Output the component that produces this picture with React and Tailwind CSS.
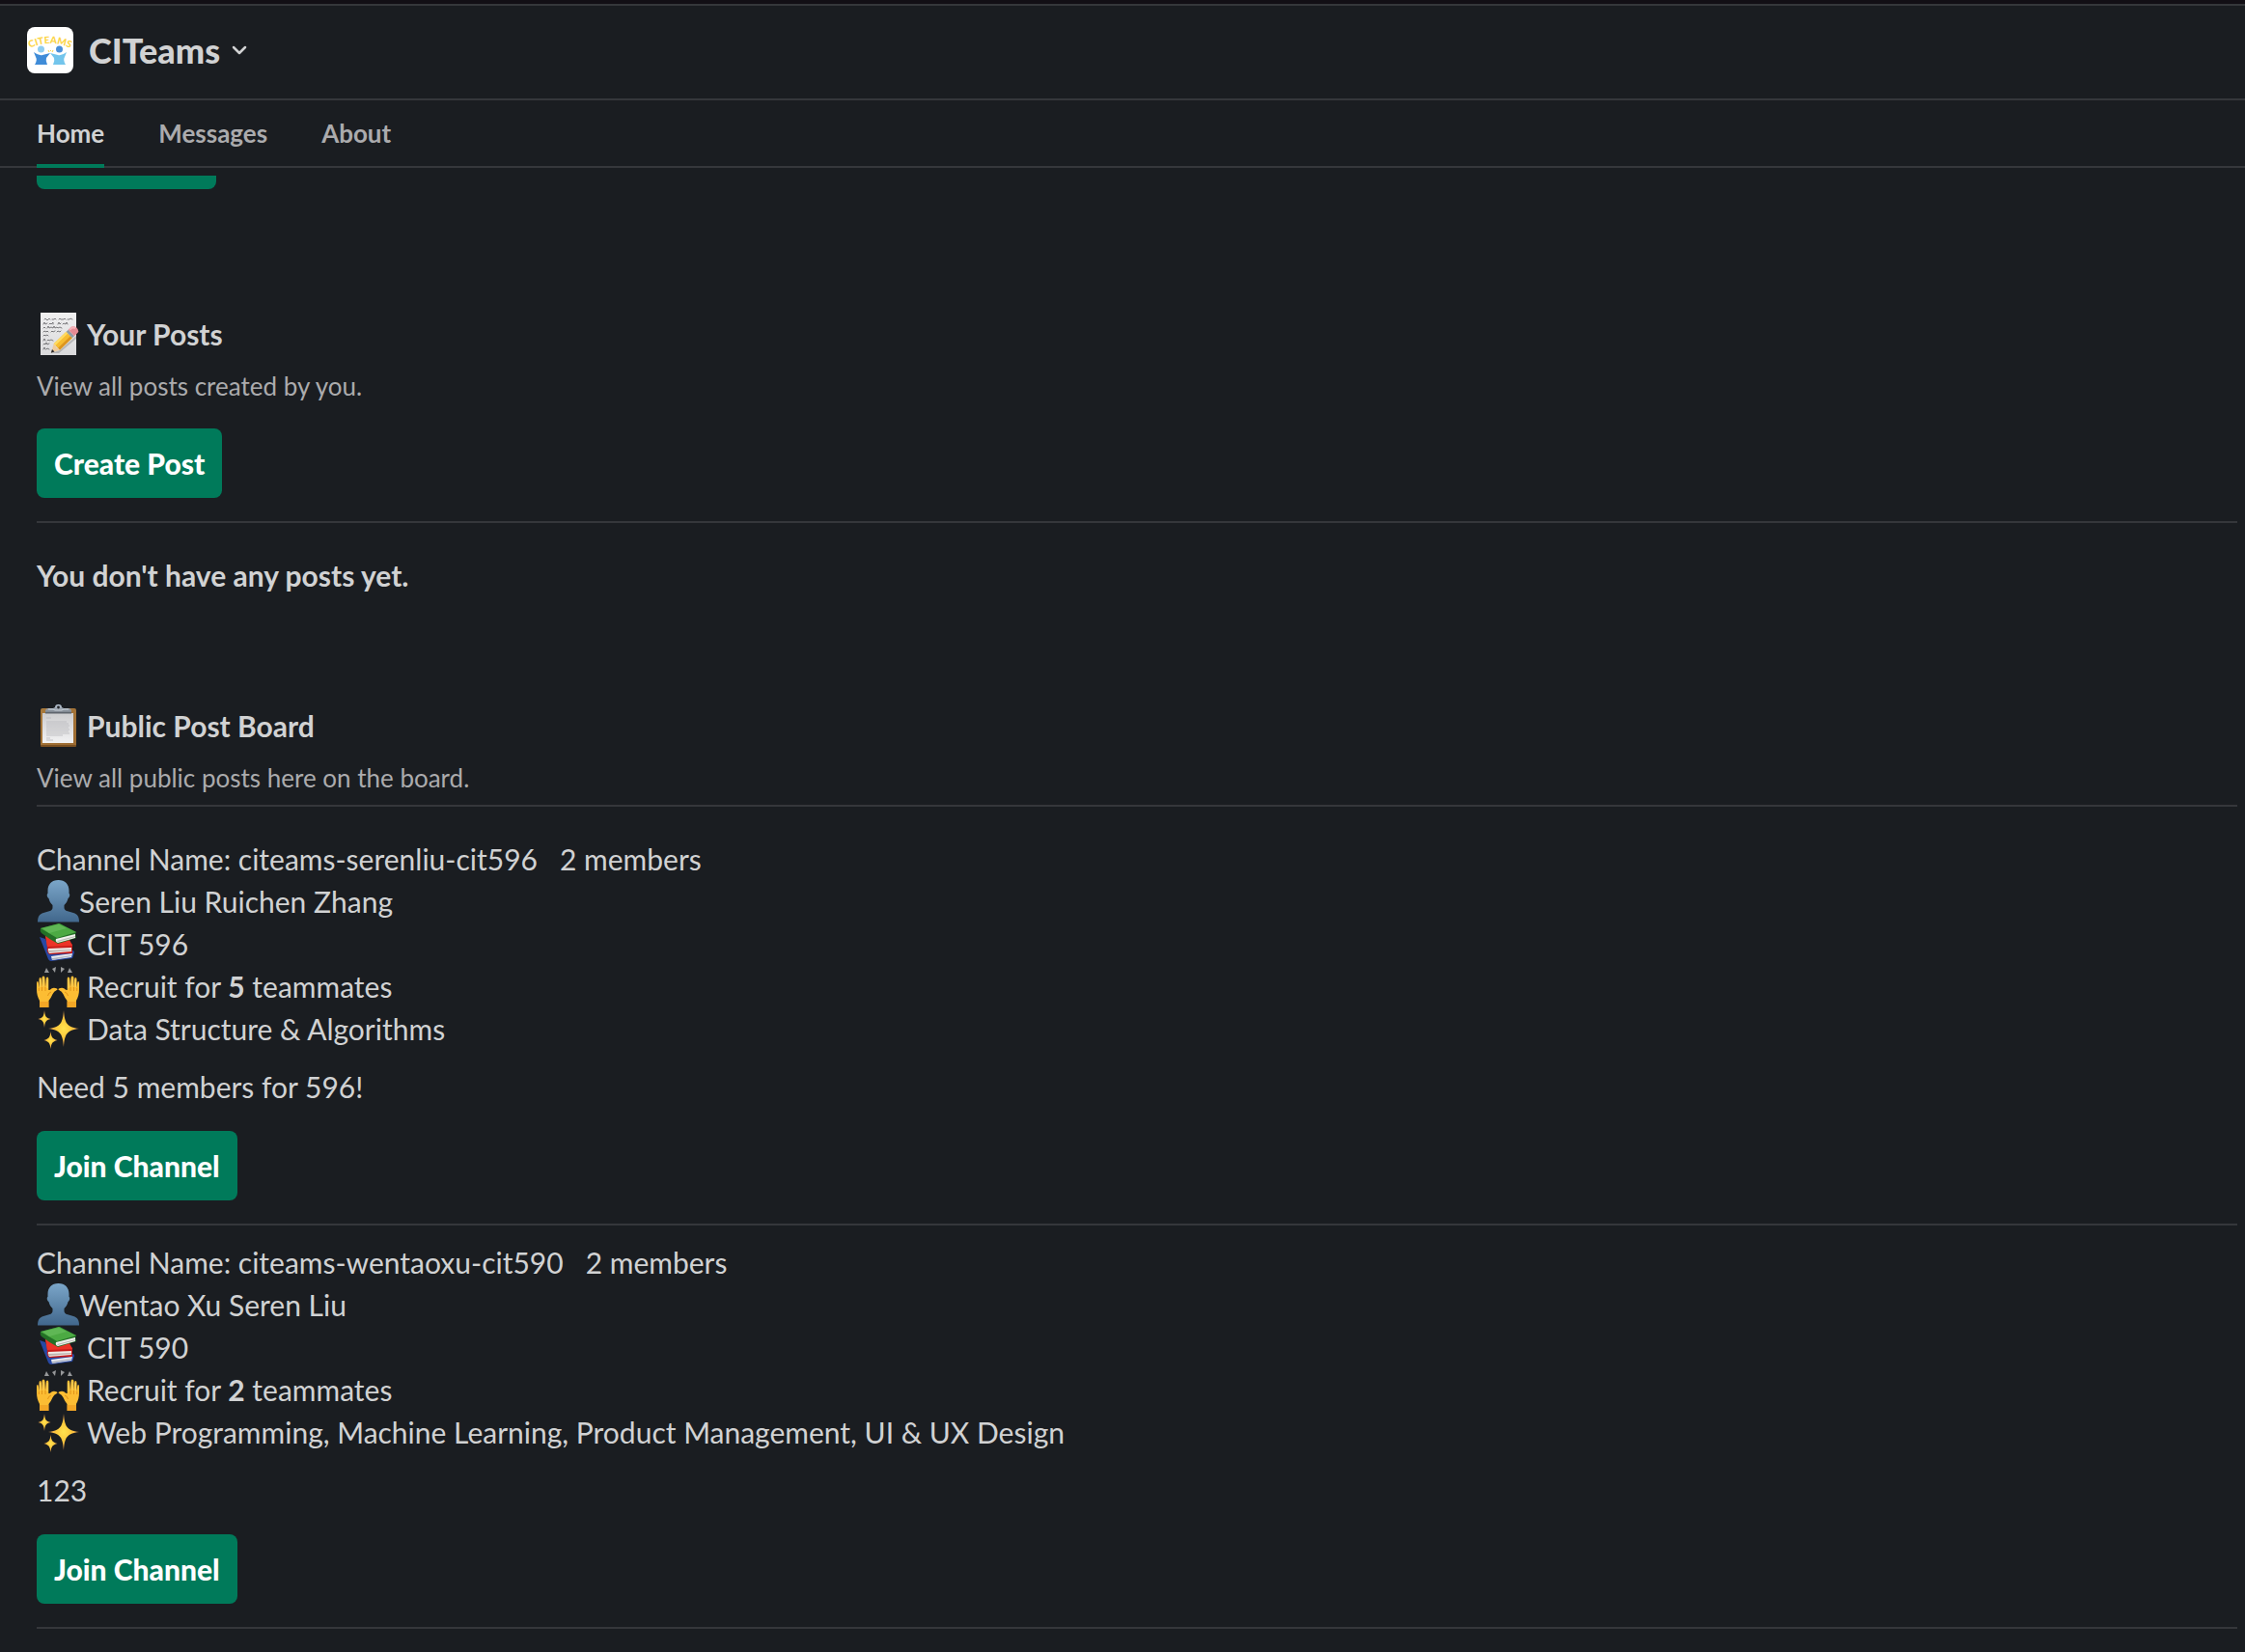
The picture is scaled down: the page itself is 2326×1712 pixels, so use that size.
import React from "react";

const POSTS = [
  {
    channel: "citeams-serenliu-cit596",
    members: 2,
    people: "Seren Liu Ruichen Zhang",
    course: "CIT 596",
    openings: 5,
    skills: "Data Structure & Algorithms",
    note: "Need 5 members for 596!",
  },
  {
    channel: "citeams-wentaoxu-cit590",
    members: 2,
    people: "Wentao Xu Seren Liu",
    course: "CIT 590",
    openings: 2,
    skills: "Web Programming, Machine Learning, Product Management, UI & UX Design",
    note: "123",
  },
];

const TABS = ["Home", "Messages", "About"];

/* ---------- Emoji ---------- */

function Emoji({ label, children }) {
  return (
    <svg viewBox="0 0 44 44" role="img" aria-label={label} className="size-11 shrink-0">
      {children}
    </svg>
  );
}

function MemoEmoji() {
  return (
    <Emoji label="memo">
      <defs>
        <linearGradient id="memo-paper" x1="0" y1="0" x2="0" y2="1">
          <stop offset="0" stopColor="#f0f0f0" />
          <stop offset="1" stopColor="#dadadc" />
        </linearGradient>
      </defs>
      <rect x="4" y="0" width="37" height="44" fill="url(#memo-paper)" />
      <g fill="none" stroke="#5c5c60" strokeWidth="0.8" strokeLinecap="round">
        <path d="M8 7q1-2 2 0t2 0 2 0M16 7h2l1-1 1 1M23 7l1-1 1 1h3l1-1 1 1M32 7h2l1-1 2 1" />
        <path d="M7 12l1-2 1 2 2-1M13 12l1-1 1 1 2-2v2M22 12l1-2 1 2 1-1M27 12l1-1 2 1 1-2 1 2" />
        <path d="M7 16l1-1 1 1M11 16l1-2 1 2 2-1 2 1 1-2 1 2 2-1 1 1 2-1 2 1" />
        <path d="M7 20l1-1 2 1 1-1 1 1M15 20l1-1 1 1 2-1M21 20l1-1 2 1 1-1" />
        <path d="M7 24l1-1 1 1 2-1 1 1" />
        <path d="M7 29l1-2 1 2M11 29l1-1 1 1 2-1 2 1" />
        <path d="M7 33l1-1 1 1 1-2 1 2 2-1" />
        <path d="M7 38l1-2 1 2M10 38l1-1 2 1" />
      </g>
      <path d="M15 42l8 0 18-15v-3L24 39z" fill="#000" opacity="0.18" />
      <path d="M17.700 32.300L30.600 19.800l6.200 6.400-12.900 12.500z" fill="#f7bd31" />
      <path d="M17.700 32.300L30.600 19.800l1.700 1.700-13 12.500z" fill="#ffdb62" />
      <path d="M22 36.700L35 24.200l1.800 2-12.900 12.500z" fill="#dc951f" />
      <path d="M30.600 19.800l2.200-2 6.200 6.400-2.200 2z" fill="#919ca5" />
      <path d="M32.800 17.800l2.600-2.800q2.600-2 6 .6 3 3.400 1 5.400L39 24.200z" fill="#e58a93" />
      <path d="M33.500 17l2-2q2.400-1.700 5.500.5l-1.500 1.500q-2.500-1.500-4.500 1.500z" fill="#f6b3b9" />
      <path d="M17.700 32.300L15 41.500l8.900-2.800-1.600-2-2.200-.4-.6-2.200z" fill="#efcb9c" />
      <path d="M16 38l-1.200 3.700 3.700-1.200z" fill="#2b2a2c" />
    </Emoji>
  );
}

function ClipboardEmoji() {
  return (
    <Emoji label="clipboard">
      <defs>
        <linearGradient id="clip-board" x1="0" y1="0" x2="1" y2="1">
          <stop offset="0" stopColor="#a97a3c" />
          <stop offset="1" stopColor="#9b6a31" />
        </linearGradient>
        <linearGradient id="clip-metal" x1="0" y1="0" x2="0" y2="1">
          <stop offset="0" stopColor="#bcc9d8" />
          <stop offset="1" stopColor="#7f868f" />
        </linearGradient>
        <linearGradient id="clip-paper" x1="0" y1="0" x2="0" y2="1">
          <stop offset="0" stopColor="#cdcdcf" />
          <stop offset="1" stopColor="#f2f2f3" />
        </linearGradient>
      </defs>
      <rect x="4" y="4" width="37" height="40" rx="2" fill="url(#clip-board)" />
      <path d="M4 42h37v1q0 1-2 1H6q-2 0-2-1z" fill="#7b5122" />
      <path d="M6 9h32v31H6z" fill="url(#clip-paper)" />
      <g stroke="#b9b9bc" strokeWidth="0.8">
        <path d="M10 14h5M10 18h21M10 20h23M10 22h24M10 24h23M10 26h24M10 28h23M10 30h24M10 32h17M10 35h4M10 37h7" />
      </g>
      <path d="M9 7q0-3 4-3h4l2-1q0-3 3.500-3T26 3l2 1h4q4 0 4 3v1H9z" fill="url(#clip-metal)" />
      <path d="M9 8h27v1.500H9z" fill="#5f656d" />
      <circle cx="22.500" cy="3" r="1.400" fill="#24262a" />
      <path d="M12 5h5l2 1h7l2-1h5" stroke="#d8dfe6" strokeWidth="0.8" fill="none" />
    </Emoji>
  );
}

function PersonEmoji() {
  return (
    <Emoji label="bust in silhouette">
      <defs>
        <linearGradient id="bust" x1="0" y1="0" x2="0" y2="1">
          <stop offset="0" stopColor="#7ba6c9" />
          <stop offset="1" stopColor="#41678c" />
        </linearGradient>
      </defs>
      <path
        d="M22.500 0c7 0 11 4.500 11 11v3c1.200.2 1 4-1 5-.6 3-2 5-4 7v2.500c0 2 1 3 3.500 3.800l6 1.700c4 1.200 6 3.500 6 9.500H1c0-6 2-8.300 6-9.500l6-1.700c2.500-.8 3.500-1.800 3.500-3.800V26c-2-2-3.400-4-4-7-2-1-2.200-4.800-1-5v-3c0-6.500 4-11 11-11z"
        fill="url(#bust)"
      />
    </Emoji>
  );
}

function BooksEmoji() {
  return (
    <Emoji label="books">
      {/* blue */}
      <path d="M3 15l6 2 7 16 22-4 1 2-2 6-22 3q-2 0-3-2z" fill="#2848a3" />
      <path d="M15 35l22-3-1 4-20 3z" fill="#e8eaf0" />
      <path d="M16 37l20-3v1l-20 4z" fill="#aeb4c2" />
      {/* red */}
      <path d="M9 13l24 5 4 5v9l-24 1q-3-3-2-7z" fill="#c71c1a" />
      <path d="M9 14l25 4 3 6-26 1z" fill="#ec3327" />
      <path d="M12 27l24-1v4l-23 2q-2-3-1-5z" fill="#eee9e5" />
      <path d="M12 29l24-1v1l-24 2z" fill="#bdb3ae" />
      {/* green */}
      <path d="M4 6l20-5 17 9-1 2 1 4-19 6Q14 18 5 11q-2-2-1-5z" fill="#237026" />
      <path d="M4 6l19-5 18 9-20 6z" fill="#4caa43" />
      <path d="M6 6l17-4 8 4-18 5z" fill="#6dc063" opacity="0.6" />
      <path d="M20 17l20-5v4l-18 5q-3-1-2-4z" fill="#f0f1ed" />
      <path d="M21 19l19-5v1l-18 5z" fill="#b8bcb5" />
    </Emoji>
  );
}

function Hand() {
  return (
    <>
      <path
        d="M3 44V37C1 33 0 30 0 25v-6q0-2 .900-2t1 2l.6 5V15q.1-2 1.200-2t1.200 2l.6 8V13.500q.1-2 1.500-2t1.500 2L9 23l.7-8.500q.2-2 1.400-2t1.200 2V26q1.700 0 3-1.500 2.500-1.500 5.700 0 1.300 1-.5 1.800-2.500 1-4 4Q15 34 12.500 37v7z"
        fill="#fcbd33"
      />
      <path d="M3 38h9.500v6H3z" fill="#e98b16" opacity="0.45" />
      <path d="M2.300 24v3M5.500 23v4M9 23v4M15 28q-3 1-3.500 4" stroke="#db8913" strokeWidth="0.8" fill="none" />
      <path d="M3.700 15v8M7 13.500v9M11 15v9" stroke="#ffd967" strokeWidth="0.9" />
    </>
  );
}

function HandsEmoji() {
  return (
    <Emoji label="raised hands">
      <Hand />
      <g transform="translate(44 0) scale(-1 1)">
        <Hand />
      </g>
      <g fill="#96989a">
        <path d="M10 3l3 5H8z" />
        <path d="M16 4l4-2-1 6z" />
        <path d="M25 2l4 2-4 4z" />
        <path d="M34 3l3 5h-5z" />
      </g>
    </Emoji>
  );
}

function SparklesEmoji() {
  return (
    <Emoji label="sparkles">
      <defs>
        <radialGradient id="spark">
          <stop offset="0" stopColor="#ffe34f" />
          <stop offset="0.5" stopColor="#fdc83c" />
          <stop offset="1" stopColor="#efa052" />
        </radialGradient>
      </defs>
      <g fill="url(#spark)">
        <path d="M28 3c1 13 3 17.500 16 19-13 1.500-15 6-16 19-1-13-3-17.500-16-19 13-1.500 15-6 16-19z" />
        <path d="M8 3c.6 6 1.500 8 6.500 9-5 1-5.900 3-6.500 9-.6-6-1.500-8-6.500-9 5-1 5.900-3 6.500-9z" />
        <path d="M14.500 25c.7 6 1.700 7.500 7 9-5.300 1.500-6.300 3-7 9-.7-6-1.700-7.500-7-9 5.300-1.500 6.300-3 7-9z" />
      </g>
    </Emoji>
  );
}

/* ---------- Header ---------- */

function Logo() {
  return (
    <svg viewBox="0 0 48 48" role="img" aria-label="CITeams logo" className="size-12 rounded-lg bg-white">
      <path id="logo-arc" d="M3 22Q24 12 45 22" fill="none" />
      <text fontFamily="Lato, sans-serif" fontSize="10" fontWeight="900" fill="#fcd548">
        <textPath href="#logo-arc" startOffset="50%" textAnchor="middle">CITEAMS</textPath>
      </text>
      <circle cx="14.500" cy="23" r="3.500" fill="#8fcdf0" />
      <circle cx="33.500" cy="23" r="3.500" fill="#4a90d9" />
      <path d="M7 26q5 4 9 3l8-2-4 5q-1 3 1 7H8q3-5 1-8z" fill="#3f8cd8" />
      <path d="M41 26q-5 4-9 3l-8-2 4 5q1 3-1 7h13q-3-5-1-8z" fill="#73c5ec" />
      <path d="M22 24l1 2M24.500 24v1M27 24l-1 2" stroke="#fcd548" strokeWidth="1" />
    </svg>
  );
}

function Header() {
  return (
    <header className="flex h-[100px] items-center border-y-2 border-[#35373b] px-7">
      <button type="button" className="flex items-center gap-4 pb-1 font-['Lato_Black','Lato',sans-serif] text-4xl font-black">
        <Logo />
        <span>CITeams</span>
        <svg viewBox="0 0 16 16" className="-ml-1 size-4" fill="none" stroke="currentColor" strokeWidth="2.5" strokeLinecap="round" strokeLinejoin="round">
          <path d="M2 5l6 6 6-6" />
        </svg>
      </button>
    </header>
  );
}

function TabBar() {
  return (
    <nav className="flex h-[70px] gap-14 border-b-2 border-[#35373b] px-[38px] text-[26px] font-bold">
      {TABS.map((tab, i) => (
        <a
          key={tab}
          href={`#${tab.toLowerCase()}`}
          className={
            i === 0
              ? "-mb-0.5 flex items-center border-b-4 border-[#007a5a] pt-0.5"
              : "flex items-center text-[#ababad]"
          }
        >
          {tab}
        </a>
      ))}
    </nav>
  );
}

/* ---------- Home tab ---------- */

function PrimaryButton({ children }) {
  return (
    <button type="button" className="block h-[72px] rounded-lg bg-[#007a5a] px-[18px] font-['Lato_Black','Lato',sans-serif] text-[30px] font-black text-white">
      {children}
    </button>
  );
}

function Divider() {
  return <hr className="border-t-2 border-[#35373b]" />;
}

function SectionTitle({ icon, title, sub }) {
  return (
    <div>
      <h2 className="flex items-center gap-2 font-bold">
        {icon}
        {title}
      </h2>
      <p className="mt-3 text-[26px] leading-10 text-[#ababad]">{sub}</p>
    </div>
  );
}

function Post({ post }) {
  return (
    <article>
      <p className="whitespace-pre">{`Channel Name: ${post.channel}   ${post.members} members`}</p>
      <p className="flex"><PersonEmoji />{post.people}</p>
      <p className="flex gap-2"><BooksEmoji />{post.course}</p>
      <p className="flex gap-2">
        <HandsEmoji />
        <span>Recruit for <b>{post.openings}</b> teammates</span>
      </p>
      <p className="flex gap-2"><SparklesEmoji />{post.skills}</p>
      <p className="mt-4 mb-6">{post.note}</p>
      <PrimaryButton>Join Channel</PrimaryButton>
      <div className="mt-6">
        <Divider />
      </div>
    </article>
  );
}

export default function App() {
  return (
    <div className="min-h-screen bg-[#1a1d21] font-['Lato',sans-serif] text-[#d1d2d3]">
      <div className="h-1 bg-[#120f15]" />
      <Header />
      <TabBar />
      <main className="pt-2 pr-2 pb-6 pl-[38px] text-[30px] leading-[44px]">
        {/* lower edge of the action scrolled under the tab bar */}
        <div className="h-3.5 w-[186px] rounded-b-lg bg-[#007a5a]" />

        <section className="mt-32">
          <SectionTitle icon={<MemoEmoji />} title="Your Posts" sub="View all posts created by you." />
          <div className="mt-6 mb-6">
            <PrimaryButton>Create Post</PrimaryButton>
          </div>
          <Divider />
          <p className="mt-8 font-bold">You don't have any posts yet.</p>
        </section>

        <section className="mt-28">
          <SectionTitle icon={<ClipboardEmoji />} title="Public Post Board" sub="View all public posts here on the board." />
          <div className="mt-2 mb-8">
            <Divider />
          </div>
          <div className="flex flex-col gap-4">
            {POSTS.map((post) => (
              <Post key={post.channel} post={post} />
            ))}
          </div>
        </section>
      </main>
    </div>
  );
}
